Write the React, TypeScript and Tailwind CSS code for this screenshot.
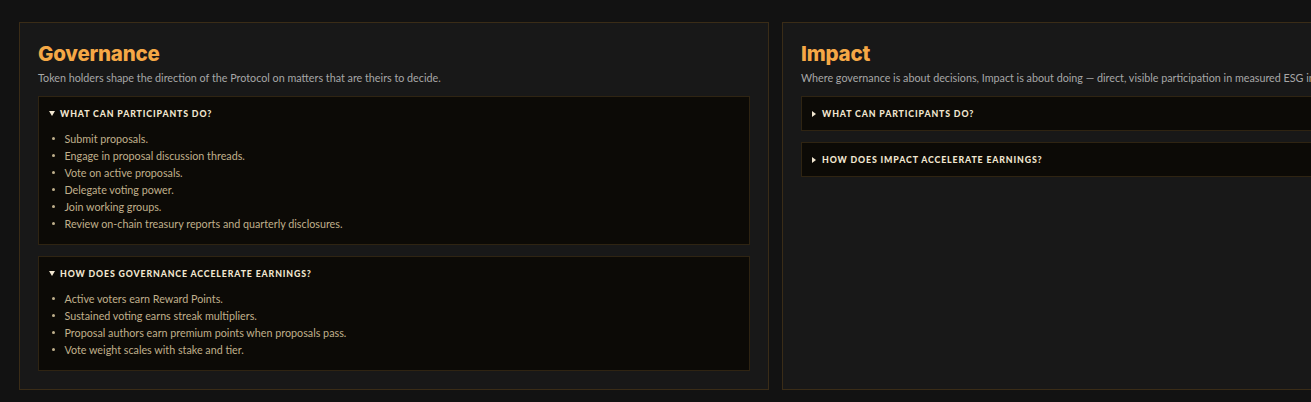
import React from "react";

type Section = {
  title: string;
  subtitle: string;
  items: { q: string; open: boolean; list: string[] }[];
};

const sections: Section[] = [
  {
    title: "Governance",
    subtitle:
      "Token holders shape the direction of the Protocol on matters that are theirs to decide.",
    items: [
      {
        q: "What can participants do?",
        open: true,
        list: [
          "Submit proposals.",
          "Engage in proposal discussion threads.",
          "Vote on active proposals.",
          "Delegate voting power.",
          "Join working groups.",
          "Review on-chain treasury reports and quarterly disclosures.",
        ],
      },
      {
        q: "How does governance accelerate earnings?",
        open: true,
        list: [
          "Active voters earn Reward Points.",
          "Sustained voting earns streak multipliers.",
          "Proposal authors earn premium points when proposals pass.",
          "Vote weight scales with stake and tier.",
        ],
      },
    ],
  },
  {
    title: "Impact",
    subtitle:
      "Where governance is about decisions, Impact is about doing — direct, visible participation in measured ESG initiatives.",
    items: [
      { q: "What can participants do?", open: false, list: [] },
      { q: "How does Impact accelerate earnings?", open: false, list: [] },
    ],
  },
];

function Marker({ open }: { open: boolean }) {
  return open ? (
    <svg width="6" height="5" viewBox="0 0 6 5" className="shrink-0">
      <path d="M0 0 L6 0 L3 5 Z" fill="#f1e6d0" />
    </svg>
  ) : (
    <svg width="4" height="6" viewBox="0 0 4 6" className="shrink-0">
      <path d="M0 0 L4 3 L0 6 Z" fill="#f1e6d0" />
    </svg>
  );
}

export default function App() {
  return (
    <div
      className="min-h-screen w-full overflow-hidden bg-[#121212]"
      style={{ fontFamily: "Lato, 'Noto Sans', sans-serif" }}
    >
      <div className="flex gap-[13px] pl-[19px] pt-[22px]">
        {sections.map((s) => (
          <section
            key={s.title}
            className="w-[750px] shrink-0 border border-[#3a2c17] bg-[#181818] px-[18px] pt-[17px] pb-[18px]"
          >
            <h2 className="font-['Inter',sans-serif] text-[20.5px] font-extrabold leading-[28px] tracking-[-0.01em] text-[#f5a846]">
              {s.title}
            </h2>
            <p className="mt-[2px] whitespace-nowrap text-[10.75px] leading-[15px] text-[#a7a7a7]">
              {s.subtitle}
            </p>
            <div className="mt-[11px] flex flex-col gap-[11px]">
              {s.items.map((it) => (
                <div
                  key={it.q}
                  className="border border-[#2f2412] bg-[#0c0a06]"
                >
                  <div
                    className={`flex items-center py-[10px] ${
                      it.open ? "gap-[5px] pl-[10px]" : "gap-[6px] pl-[10px]"
                    }`}
                  >
                    <Marker open={it.open} />
                    <span className="text-[8.75px] font-black uppercase leading-[13px] tracking-[0.1em] text-[#f1e6d0]">
                      {it.q}
                    </span>
                  </div>
                  {it.open && (
                    <ul className="pb-[12px]">
                      {it.list.map((li) => (
                        <li
                          key={li}
                          className="flex items-center pl-[13px] text-[10.75px] leading-[17px] text-[#c0b08c]"
                        >
                          <span className="mr-[10px] h-[2.5px] w-[2.5px] rounded-full bg-[#c0b08c]" />
                          {li}
                        </li>
                      ))}
                    </ul>
                  )}
                </div>
              ))}
            </div>
          </section>
        ))}
      </div>
    </div>
  );
}
